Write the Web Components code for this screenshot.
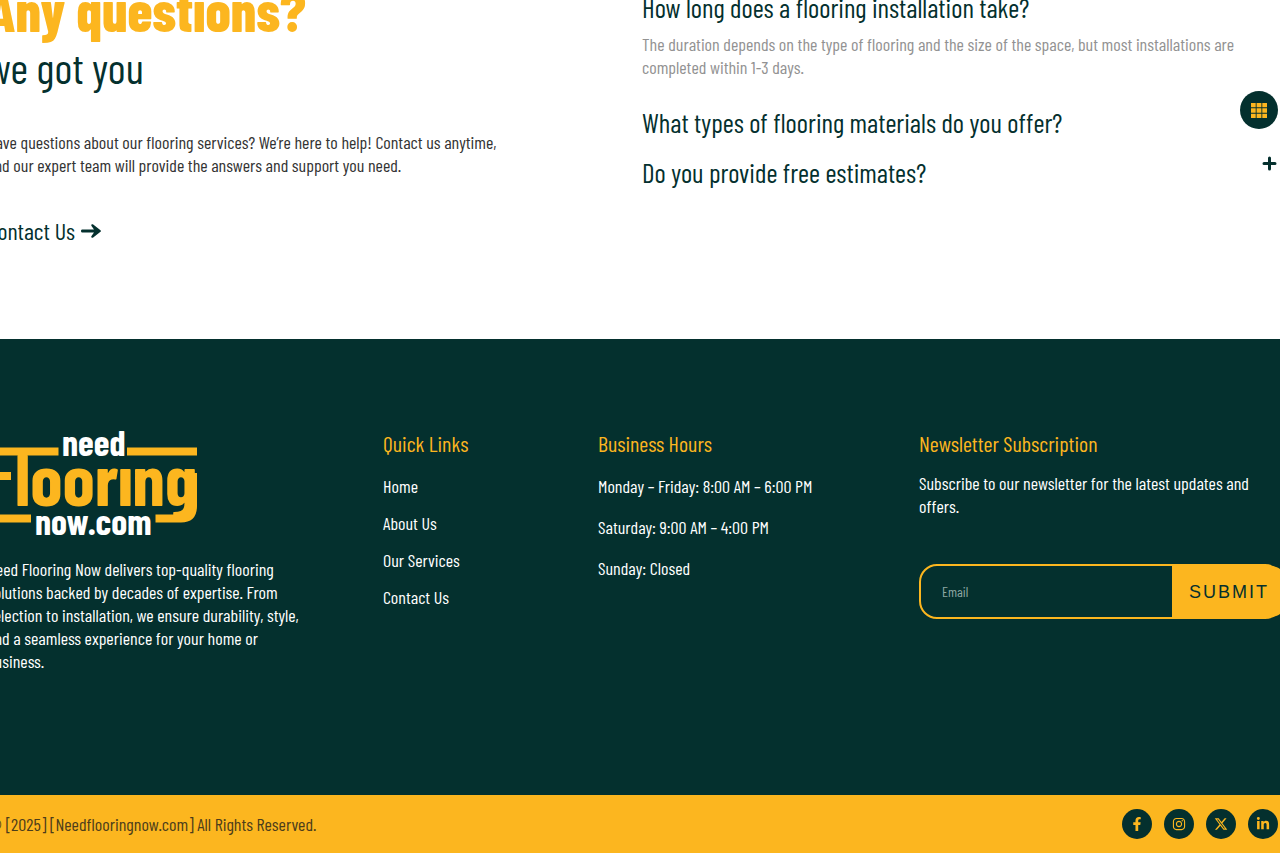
<!DOCTYPE html>
<html lang="en">
<head>
<meta charset="utf-8">
<meta name="viewport" content="width=device-width, initial-scale=1">
<title>Need Flooring Now</title>
<style>
:root{--green:#04302e;--gold:#fcb61f;--ink:#333;--muted:#929292}
body{margin:0;background:#fff;color:var(--ink);font:18px/23px "Barlow Condensed","Liberation Sans Narrow","Roboto Condensed","Liberation Sans",sans-serif;overflow-x:hidden}
</style>
</head>
<body>
<site-page></site-page>
<script>
const define = (name, html, setup) => customElements.define(name, class extends HTMLElement {
  connectedCallback() {
    if (this.shadowRoot) return;
    const t = document.createElement('template');
    t.innerHTML = html;
    this.attachShadow({ mode: 'open' }).append(t.content.cloneNode(true));
    if (setup) setup(this);
  }
});

define('contact-intro', `<style>
:host{display:block}
h2{margin:0;color:var(--green);font-size:43px;font-weight:400;line-height:56px}
h2 strong{display:block;color:var(--gold);font-size:56px;font-weight:800;line-height:58px}
p{margin:36px 0 0;max-width:520px}
a{display:inline-flex;align-items:center;gap:6px;margin-top:40px;color:var(--green);font-size:24px;line-height:28px;text-decoration:none}
svg{display:block;width:20px;height:16px}
</style>
<h2><strong>Any questions?</strong>we got you</h2>
<p>Have questions about our flooring services? We’re here to help! Contact us anytime, and our expert team will provide the answers and support you need.</p>
<a href="#contact">Contact Us <svg viewBox="0 0 20 16" fill="currentColor" aria-hidden="true"><path d="M1 6.500h12L10.500 3c-.8-1.200.6-2.300 1.700-1.400L19.500 7.200c.6.500.6 1.100 0 1.600L12.200 14.400c-1.100.9-2.500-.2-1.700-1.400L13 9.500H1C-.3 9.500-.3 6.500 1 6.500z"/></svg></a>`);

define('faq-item', `<style>
:host{display:block;margin-bottom:18px}
h3{margin:0;font:inherit}
button{display:flex;justify-content:space-between;align-items:flex-start;width:100%;padding:0;border:0;background:none;color:var(--green);font:inherit;font-size:27px;line-height:32px;text-align:left}
svg{display:none;width:15px;height:15px}
:host([marked]) svg{display:block}
.answer{color:var(--muted);max-width:610px}
:host([open]){margin-bottom:27px}
:host([open]) .answer{margin-top:10px}
</style>
<h3><button type="button"><slot name="question"></slot><svg viewBox="0 0 15 15" stroke="currentColor" stroke-width="3" stroke-linecap="round" aria-hidden="true"><path d="M7.500 2v11M2 7.500h11"/></svg></button></h3>
<div class="answer"><slot></slot></div>`, el => {
  el.shadowRoot.querySelector('button').setAttribute('aria-expanded', el.hasAttribute('open'));
});

define('brand-logo', `<style>
:host{display:block}
svg{display:block;width:211px;height:108px}
text{font-weight:700}
</style>
<svg viewBox="-3 0 211 108" role="img" aria-label="Need Flooring now.com">
<g fill="none" stroke="#fcb61f" stroke-width="8">
<path d="M0 22.500H68.500M137 22.500H207M0 47H21M0 89.500H41"/><path d="M0 18.500V81" stroke-width="14"/>
<path d="M203 44V77Q203 89.500 191 89.500H165.500"/></g>
<g fill="#fff" font-size="36"><text x="72" y="27">need</text><text x="45" y="106">now.com</text></g>
<text x="25" y="77" font-size="73" fill="#fcb61f">loorıng</text>
</svg>`);

define('footer-column', `<style>
:host{display:block}
h4{margin:0;color:var(--gold);font-size:22px;line-height:28px;font-weight:400}
</style><h4><slot name="title"></slot></h4><slot></slot>`);

define('link-list', `<style>
:host{display:block}
ul{list-style:none;margin:18px 0 0;padding:0;display:grid;gap:14px}
a{color:#fff;text-decoration:none}
</style><ul><li><a href="#home">Home</a></li><li><a href="#about">About Us</a></li><li><a href="#services">Our Services</a></li><li><a href="#contact">Contact Us</a></li></ul>`);

define('opening-hours', `<style>
:host{display:grid;gap:18px;margin-top:18px}p{margin:0}
</style><p>Monday – Friday: 8:00 AM – 6:00 PM</p><p>Saturday: 9:00 AM – 4:00 PM</p><p>Sunday: Closed</p>`);

define('newsletter-form', `<style>
:host{display:block}
p{margin:15px 0 46px;max-width:350px}
form{display:flex;box-sizing:border-box;height:55px;border:2px solid var(--gold);border-radius:18px;margin-right:7px}
input{flex:1;min-width:0;border:0;padding:0 21px;background:none;color:#fff;font:inherit;font-size:14px;outline-offset:-4px}
input::placeholder{color:#8fa8a5;opacity:1}
button{flex:none;width:116px;margin-right:-7px;padding:0 17px;border:0;border-radius:0 18px 18px 0;background:var(--gold);color:var(--green);font:18px/24px "Liberation Sans",Arial,sans-serif;letter-spacing:2px;text-align:left}
</style>
<p>Subscribe to our newsletter for the latest updates and offers.</p>
<form><input type="email" placeholder="Email" aria-label="Email"><button type="button">SUBMIT</button></form>`);

define('social-link', `<style>
:host{display:block}
a{display:grid;place-items:center;width:30px;height:30px;border-radius:50%;background:var(--green);color:var(--gold)}
svg{display:block;width:14px;height:14px;fill:currentColor}
</style><a href="#"><svg aria-hidden="true"></svg></a>`, el => {
  const shapes = {
    Facebook: ['0 0 320 512', 'M279.140 288l14.220-92.660h-88.910v-60.130c0-25.350 12.420-50.060 52.240-50.060h40.420V6.260S260.430 0 225.360 0c-73.220 0-121.080 44.380-121.080 124.720v70.620H22.890V288h81.390v224h100.170V288z'],
    Instagram: ['0 0 448 512', 'M224 141c-64 0-115 51-115 115s51 115 115 115 115-51 115-115-51-115-115-115zm0 190a75 75 0 1 1 0-150 75 75 0 0 1 0 150zm146-194a27 27 0 1 1-54 0 27 27 0 0 1 54 0zM130 32C55 32 0 87 0 162v188c0 75 55 130 130 130h188c75 0 130-55 130-130V162c0-75-55-130-130-130H130zm0 40h188c54 0 90 36 90 90v188c0 54-36 90-90 90H130c-54 0-90-36-90-90V162c0-54 36-90 90-90z'],
    X: ['0 0 512 512', 'M389.200 48h70.600L305.600 224.200 487 464H345L233.700 318.600 106.500 464H35.800l164.900-188.500L26.800 48h145.600l100.500 132.900zm-24.800 373.800h39.100L151.100 88h-42z'],
    LinkedIn: ['0 0 448 512', 'M100.280 448H7.400V148.900h92.880zM53.790 108.100C24.090 108.100 0 83.500 0 53.800a53.790 53.790 0 0 1 107.580 0c0 29.700-24.100 54.300-53.790 54.300zM447.900 448h-92.680V302.400c0-34.700-.7-79.200-48.290-79.200-48.290 0-55.690 37.700-55.690 76.700V448h-92.780V148.900h89.080v40.800h1.300c12.400-23.500 42.690-48.300 87.880-48.300 94 0 111.280 61.900 111.280 142.300V448z']
  };
  const [box, d] = shapes[el.getAttribute('name')], svg = el.shadowRoot.querySelector('svg');
  svg.setAttribute('viewBox', box);
  svg.innerHTML = '<path d="' + d + '"/>';
  el.shadowRoot.querySelector('a').setAttribute('aria-label', el.getAttribute('name'));
});

define('floating-menu', `<style>
:host{display:block;position:fixed;top:91px;right:2px}
button{display:grid;place-items:center;width:38px;height:38px;padding:0;border:0;border-radius:50%;background:var(--green)}
svg{display:block;width:16px;height:15px;fill:var(--gold)}
</style><button type="button" aria-label="Menu"><svg viewBox="0 0 16 15" aria-hidden="true"><path d="M0 0h4.700v4.300H0zM5.600 0h4.800v4.300H5.600zM11.300 0H16v4.300h-4.700zM0 5.300h4.700v4.400H0zM5.600 5.300h4.800v4.400H5.600zM11.300 5.300H16v4.400h-4.700zM0 10.700h4.700V15H0zM5.600 10.700h4.800V15H5.600zM11.300 10.700H16V15h-4.700z"/></svg></button>`);

define('site-page', `<style>
:host{display:block;overflow:hidden}
.wrap{margin:0 -10px 0 -13px}
.help{display:grid;grid-template-columns:651fr 648fr;gap:4px;padding-bottom:94px;margin-top:-19px}
.faq{padding:10px 13px 0 0}
footer{background:var(--green);color:#fff}
.cols{display:grid;grid-template-columns:396fr 215fr 321fr 371fr;padding:90px 0 122px}
.about p{margin:21px 0 0;max-width:316px}
.bar{background:var(--gold);color:#4c3d1b}
.bar .wrap{display:flex;justify-content:space-between;align-items:center;padding:14px 12px 14px 0}
.bar p{margin:0}
nav{display:flex;gap:12px}
</style>
<main class="wrap help">
<contact-intro></contact-intro>
<div class="faq">
<faq-item open><span slot="question">How long does a flooring installation take?</span>The duration depends on the type of flooring and the size of the space, but most installations are completed within 1-3 days.</faq-item>
<faq-item><span slot="question">What types of flooring materials do you offer?</span></faq-item>
<faq-item marked><span slot="question">Do you provide free estimates?</span></faq-item>
</div>
</main>
<footer>
<div class="wrap cols">
<div class="about"><brand-logo></brand-logo><p>Need Flooring Now delivers top-quality flooring solutions backed by decades of expertise. From selection to installation, we ensure durability, style, and a seamless experience for your home or business.</p></div>
<footer-column><span slot="title">Quick Links</span><link-list></link-list></footer-column>
<footer-column><span slot="title">Business Hours</span><opening-hours></opening-hours></footer-column>
<footer-column><span slot="title">Newsletter Subscription</span><newsletter-form></newsletter-form></footer-column>
</div>
<div class="bar"><div class="wrap"><p>© [2025] [Needflooringnow.com] All Rights Reserved.</p>
<nav aria-label="Social"><social-link name="Facebook"></social-link><social-link name="Instagram"></social-link><social-link name="X"></social-link><social-link name="LinkedIn"></social-link></nav></div></div>
</footer>
<floating-menu></floating-menu>`);
</script>
</body>
</html>
